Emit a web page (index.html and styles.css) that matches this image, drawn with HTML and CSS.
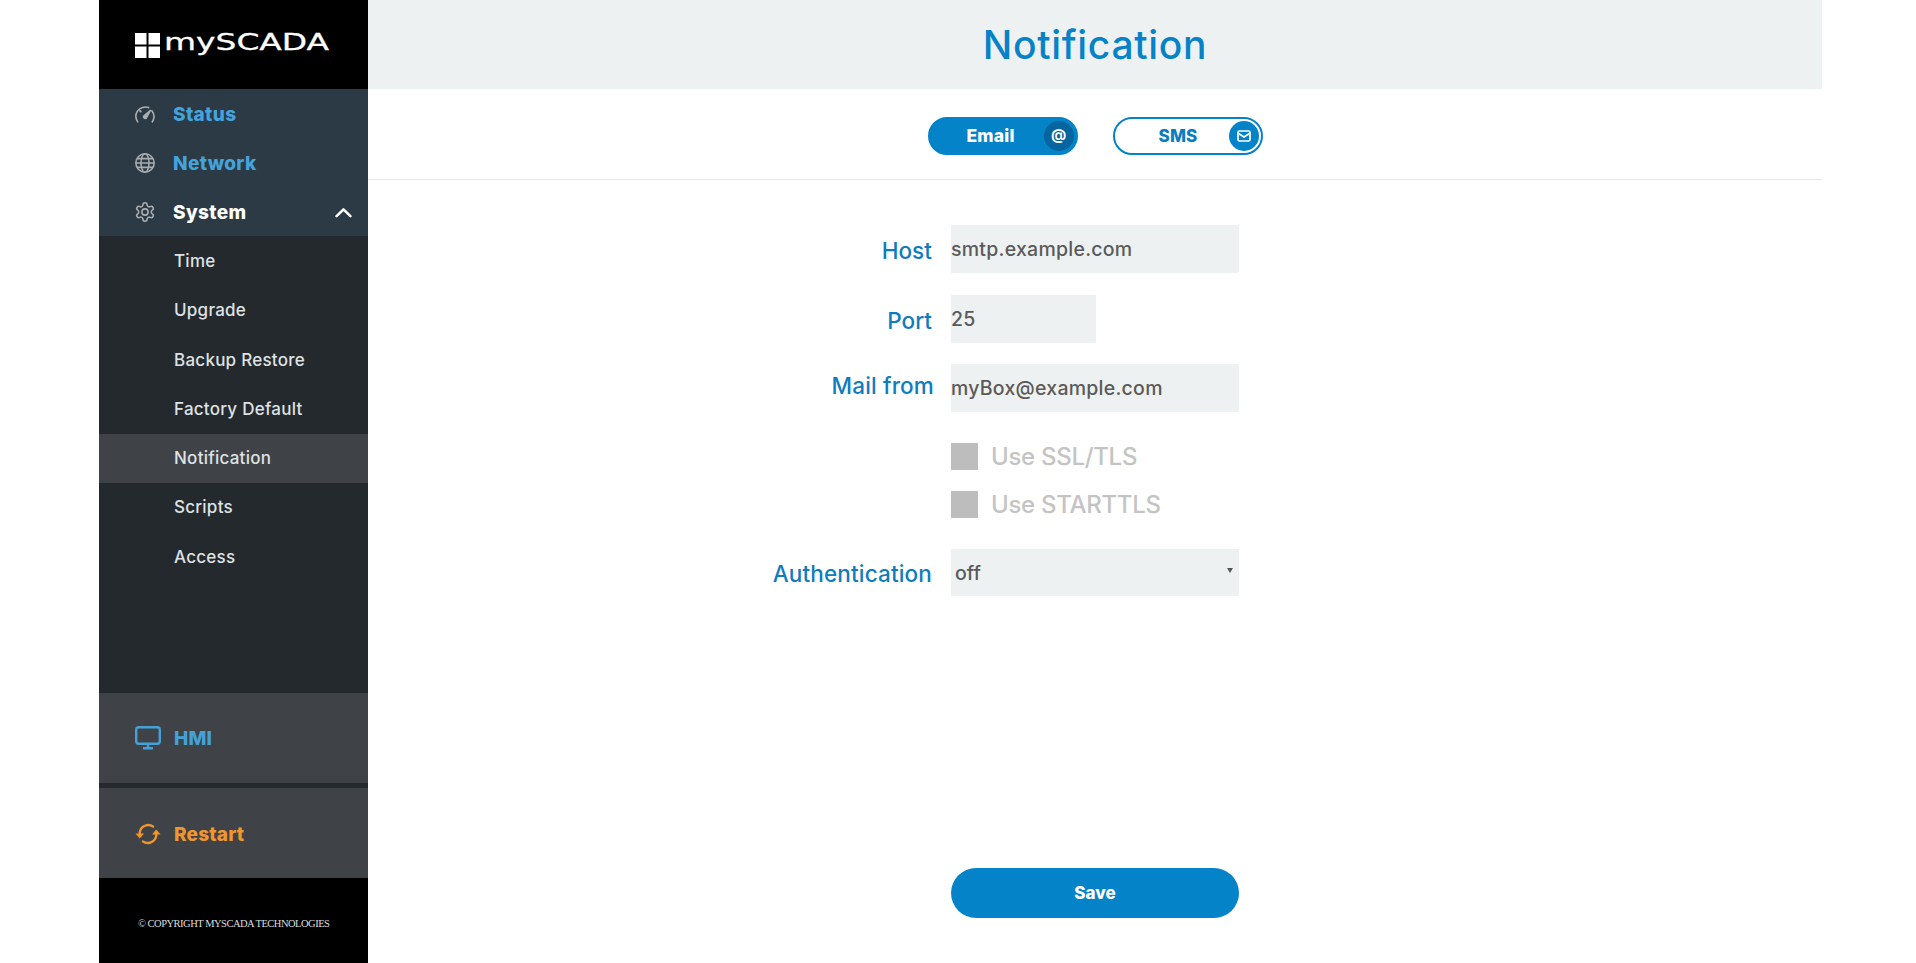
FILE: index.html
```html
<!DOCTYPE html>
<html lang="en">
<head>
<meta charset="utf-8">
<title>mySCADA Notification</title>
<link rel="stylesheet" href="styles.css">
</head>
<body>
<div class="app">
  <aside class="sidebar">
    <div class="brand">
      <svg class="brand-mark" viewBox="0 0 25 25"><path fill="#fff" d="M0 0h11.5v11.5H0zM13.5 0H25v11.5H13.5zM0 13.5h11.5V25H0zM13.5 13.5H25V25H13.5z"/></svg>
      <span class="brand-name">mySCADA</span>
    </div>
    <nav class="nav-main">
      <a class="nav-item nav-status">
        <svg class="nav-icon" viewBox="0 0 24 24" fill="none" stroke="#a9adb0" stroke-width="1.8" stroke-linecap="round"><path d="M4 20.500A10.500 10.500 0 0 1 2 14.500 10.500 10.500 0 0 1 16 5M19.500 8.500a10.500 10.500 0 0 1 .500 12M6.500 8.500l1 1"/><path fill="#a9adb0" stroke-width="1.500" stroke-linejoin="round" d="M18 8l-7.500 6.200a2 2 0 0 0 2.700 2.600z"/></svg>
        <span>Status</span>
      </a>
      <a class="nav-item">
        <svg class="nav-icon" viewBox="0 0 24 24" fill="none" stroke="#a9adb0" stroke-width="1.700"><circle cx="12" cy="12" r="10"/><ellipse cx="12" cy="12" rx="4.400" ry="10"/><path d="M2 12h20M3.300 7.200h17.400M3.300 16.800h17.400"/></svg>
        <span>Network</span>
      </a>
      <a class="nav-item nav-open">
        <svg class="nav-icon" viewBox="0 0 24 24" fill="none" stroke="#a9adb0" stroke-width="1.700" stroke-linejoin="round"><path d="M12.220 2h-.44a2 2 0 0 0-2 2v.18a2 2 0 0 1-1 1.730l-.43.25a2 2 0 0 1-2 0l-.15-.08a2 2 0 0 0-2.730.73l-.22.38a2 2 0 0 0 .73 2.730l.15.1a2 2 0 0 1 1 1.720v.51a2 2 0 0 1-1 1.740l-.15.09a2 2 0 0 0-.73 2.730l.22.38a2 2 0 0 0 2.730.73l.15-.08a2 2 0 0 1 2 0l.43.25a2 2 0 0 1 1 1.730V20a2 2 0 0 0 2 2h.44a2 2 0 0 0 2-2v-.18a2 2 0 0 1 1-1.730l.43-.25a2 2 0 0 1 2 0l.15.08a2 2 0 0 0 2.730-.73l.22-.39a2 2 0 0 0-.73-2.730l-.15-.08a2 2 0 0 1-1-1.740v-.5a2 2 0 0 1 1-1.740l.15-.09a2 2 0 0 0 .73-2.730l-.22-.38a2 2 0 0 0-2.730-.73l-.15.08a2 2 0 0 1-2 0l-.43-.25a2 2 0 0 1-1-1.730V4a2 2 0 0 0-2-2z"/><circle cx="12" cy="12" r="3.400"/></svg>
        <span>System</span>
        <svg class="chevron" viewBox="0 0 16 10" fill="none" stroke="#fff" stroke-width="2.400" stroke-linecap="round" stroke-linejoin="round"><path d="M1.500 8.500 8 2l6.500 6.500"/></svg>
      </a>
    </nav>
    <div class="nav-sub">
      <a class="sub-item">Time</a>
      <a class="sub-item">Upgrade</a>
      <a class="sub-item">Backup Restore</a>
      <a class="sub-item">Factory Default</a>
      <a class="sub-item is-active">Notification</a>
      <a class="sub-item">Scripts</a>
      <a class="sub-item">Access</a>
    </div>
    <a class="panel-link panel-hmi">
      <svg class="panel-icon" viewBox="0 0 26 24" fill="none" stroke="#45a0d8" stroke-width="2.400"><rect x="1.200" y="1.200" width="23.600" height="16.600" rx="2.500"/><path d="M13 18v4M8 22.300h10"/></svg>
      <span>HMI</span>
    </a>
    <a class="panel-link panel-restart">
      <svg class="panel-icon" viewBox="0 0 26 24" fill="none" stroke="#f0962e" stroke-width="2.400" stroke-linecap="round"><path d="M4.800 12.500A8.500 8.500 0 0 1 18 4.500M21.200 11.500A8.500 8.500 0 0 1 8 19.500"/><path fill="#f0962e" stroke="none" d="M.5 11.500h8.600l-4.300 5zM17 12.500h8.600L21.200 7.500z"/></svg>
      <span>Restart</span>
    </a>
    <footer class="copyright">© COPYRIGHT MYSCADA TECHNOLOGIES</footer>
  </aside>
  <main class="main">
    <header class="page-title"><h1>Notification</h1></header>
    <div class="tabs">
      <a class="tab tab-on"><span class="tab-label">Email</span><span class="tab-badge"><span class="tab-at">@</span></span></a>
      <a class="tab"><span class="tab-label">SMS</span><span class="tab-badge"><svg class="tab-mail" viewBox="0 0 14 12" fill="none" stroke="#fff" stroke-width="1.700"><rect x="1" y="1" width="12" height="10" rx="1.500"/><path d="M1.500 3.500 7 7l5.500-3.500"/></svg></span></a>
    </div>
    <form class="form">
      <div class="row row-host">
        <label class="label">Host</label>
        <input class="field" type="text" value="smtp.example.com">
      </div>
      <div class="row row-port">
        <label class="label">Port</label>
        <input class="field field-short" type="text" value="25">
      </div>
      <div class="row row-mail">
        <label class="label label-mail">Mail from</label>
        <input class="field" type="text" value="myBox@example.com">
      </div>
      <div class="check check-ssl"><span class="box"></span><span>Use SSL/TLS</span></div>
      <div class="check"><span class="box"></span><span>Use STARTTLS</span></div>
      <div class="row row-auth">
        <label class="label">Authentication</label>
        <div class="select"><span>off</span><span class="caret"></span></div>
      </div>
      <button class="save" type="button">Save</button>
    </form>
  </main>
</div>
</body>
</html>
```
FILE: styles.css
```css
* { box-sizing: border-box; }
html, body { margin: 0; height: 100%; background: #fff; }
body { font-family: Inter, "Noto Sans", sans-serif; overflow: hidden; }
a { display: block; text-decoration: none; }

.app { display: flex; height: 963px; padding: 0 94px 0 99px; }

.sidebar { width: 269px; flex: none; display: flex; flex-direction: column; background: #24292d; }
.brand { height: 89px; flex: none; background: #000; display: flex; align-items: center; padding: 0 0 0 36px; gap: 4px; color: #fff; }
.brand-mark { width: 25px; height: 25px; margin-top: 2px; }
.brand-name { display: inline-block; font-family: "DejaVu Sans", sans-serif; font-size: 23px; margin-top: -5px; white-space: nowrap; transform: scaleX(1.430); transform-origin: left center; -webkit-text-stroke: .3px #fff; }

.nav-main { background: #2b3a45; height: 147px; flex: none; display: flex; flex-direction: column; }
.nav-item { height: 49.500px; display: flex; align-items: center; padding-left: 35px; color: #45a3dc; font-size: 19px; font-weight: 800; letter-spacing: .35px; }
.nav-item span { margin-top: 1px; }
.nav-icon { width: 22px; height: 22px; margin-right: 17px; flex: none; }
.nav-open { color: #fff; position: relative; }
.chevron { position: absolute; right: 16px; top: 20px; width: 17px; height: 11px; }

.nav-sub { flex: 1; padding-top: 1px; }
.sub-item { height: 49.300px; padding-left: 75px; line-height: 49px; color: #dfe2e4; font-size: 17px; font-weight: 500; letter-spacing: .25px; }
.is-active { background: #3f4347; }

.panel-link { height: 90px; flex: none; background: #3f4347; display: flex; align-items: center; padding: 0 0 0 36px; font-size: 19px; font-weight: 800; letter-spacing: .2px; }
.panel-icon { width: 26px; height: 24px; margin-right: 13px; flex: none; }
.panel-hmi { color: #45a0d8; margin-bottom: 5px; }
.panel-restart { color: #f0962e; padding-top: 2px; }

.copyright { height: 85px; flex: none; background: #000; color: #ddd; font-family: "Liberation Serif", serif; font-size: 10.500px; line-height: 91px; padding-left: 39px; white-space: nowrap; letter-spacing: -.5px; }

.main { flex: 1; min-width: 0; }
.page-title { height: 89px; background: #eef1f1; display: flex; align-items: center; justify-content: center; }
.page-title h1 { margin: 0; color: #0682c8; font-size: 39px; font-weight: 500; letter-spacing: .7px; }

.tabs { height: 91px; border-bottom: 1px solid #e6e8e8; display: flex; justify-content: center; gap: 35px; padding: 28px 0 0 0; }
.tab { width: 150px; height: 38px; border-radius: 19px; border: 2px solid #0583c8; position: relative; color: #0b7cc0; font-size: 17px; font-weight: 800; display: flex; align-items: center; justify-content: center; padding-right: 19px; letter-spacing: .1px; }
.tab-on { background: #0583c8; color: #fff; font-size: 17.500px; padding-right: 24px; letter-spacing: .2px; }
.tab-on .tab-label { margin-top: -1px; }
.tab-badge { position: absolute; right: 2px; top: 2px; width: 30px; height: 30px; border-radius: 50%; background: #0583c8; color: #fff; display: flex; align-items: center; justify-content: center; }
.tab-at { font-size: 15px; font-weight: 700; letter-spacing: 0; margin-top: -3px; }
.tab-on .tab-badge { background: #06649e; }
.tab-mail { width: 14px; height: 12px; }

.form { padding: 45px 0 0 583px; }
.row { display: flex; align-items: center; position: relative; }
.row-port { margin-top: 22px; }
.row-mail { margin-top: 21px; }
.row-auth { margin-top: 31px; }
.label { position: absolute; right: 100%; margin-right: 19px; color: #0f7cbd; font-size: 22.500px; font-weight: 500; letter-spacing: .05px; white-space: nowrap; margin-top: 2px; }
.label-mail { margin-right: 17px; margin-top: -5px; letter-spacing: .15px; }
.row-auth .label { margin-top: 1px; letter-spacing: .15px; }
.field { display: block; width: 288px; height: 48px; border: 0; padding: 0; background: #eef1f1; color: #5a5a5a; font: 500 19.500px Inter, sans-serif; letter-spacing: .25px; outline: 0; }
.field-short { width: 145px; }
.check { display: flex; align-items: center; gap: 13px; height: 27px; color: #c4c4c4; font-size: 24px; font-weight: 500; letter-spacing: -.3px; margin-top: 21px; white-space: nowrap; }
.check-ssl { margin-top: 31px; }
.box { width: 27px; height: 27px; background: #bdbdbd; flex: none; }
.select { width: 288px; height: 47px; background: #eef1f1; color: #5a5a5a; display: flex; align-items: center; justify-content: space-between; padding: 0 6px 0 4px; font-size: 19.500px; font-weight: 500; }
.caret { width: 0; height: 0; border: 3px solid transparent; border-top: 5px solid #555; border-bottom: 0; margin-bottom: 4px; }
.save { display: block; width: 288px; height: 50px; margin-top: 272px; border: 0; border-radius: 25px; background: #0583c8; color: #fff; font: 800 17px Inter, sans-serif; }
```
